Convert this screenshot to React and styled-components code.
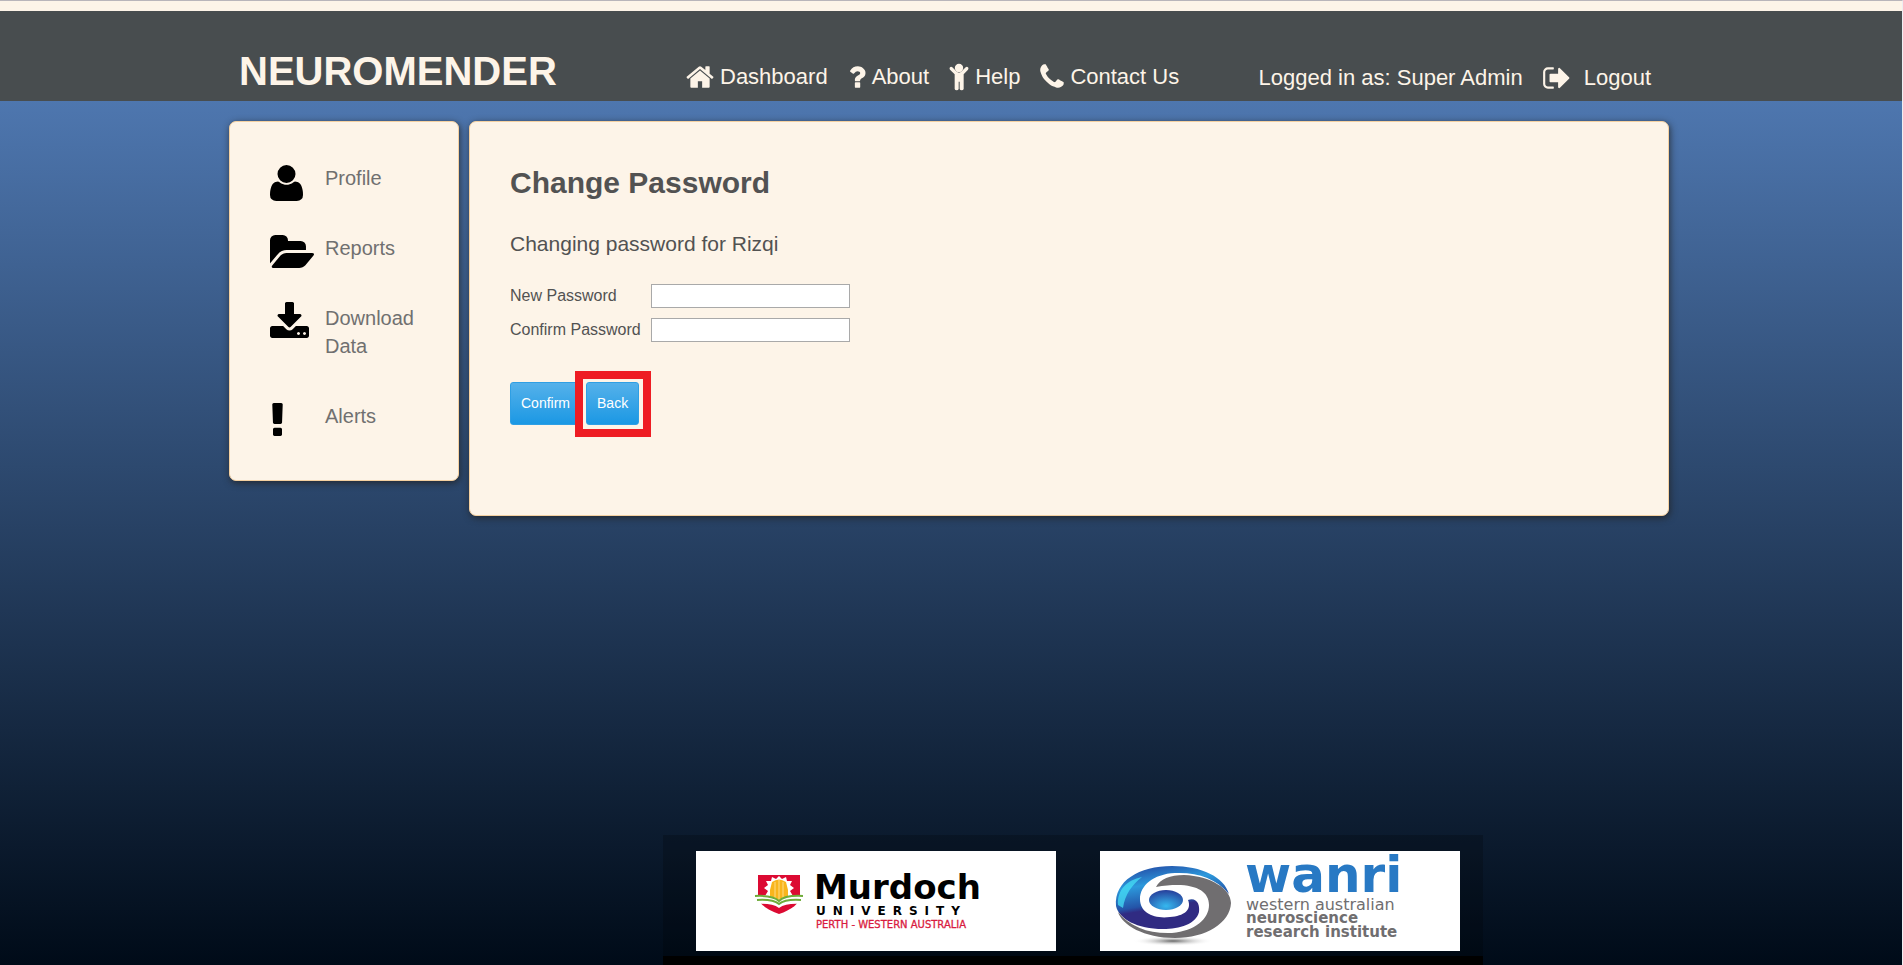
import React from 'react';
import styled, { createGlobalStyle } from 'styled-components';

const cream = '#fdf4e8';

const GlobalStyle = createGlobalStyle`
  * { box-sizing: border-box; }
  body {
    margin: 0;
    font-family: "Liberation Sans", Arial, sans-serif;
    color: #525252;
  }
`;

const Page = styled.div`
  min-height: 100vh;
  display: flex;
  flex-direction: column;
  border-top: 1px solid #b9b5ba;
  border-right: 1px solid #eeeef2;
  background: linear-gradient(to bottom, #4f78b1 0, #4f78b1 9%, #000b18 100%);
`;

const TopStrip = styled.div`
  height: 10px;
  background: ${cream};
`;

const Container = styled.div`
  width: 100%;
  max-width: 1444px;
  margin: 0 auto;
  padding-right: 4px;
`;

const Header = styled.header`
  background: #484d4f;
`;

const HeaderRow = styled(Container)`
  height: 90px;
  padding-top: 36px;
  display: flex;
  align-items: flex-start;
  color: ${cream};
`;

const Brand = styled.h1`
  margin: 0 0 0 10px;
  width: 447px;
  font-size: 40px;
  line-height: 48px;
`;

const Nav = styled.nav`
  display: flex;
  flex: 1;
  gap: 20px;
  padding-top: 15px;
`;

const NavLink = styled.a`
  display: flex;
  align-items: center;
  gap: ${(p) => p.$gap || 6}px;
  color: inherit;
  font-size: 22px;
  line-height: 30px;
  text-decoration: none;
  white-space: nowrap;
`;

const Account = styled.div`
  display: flex;
  align-items: center;
  gap: 20px;
  padding: 16px 18px 0 0;
  font-size: 22px;
  line-height: 30px;
`;

const Columns = styled(Container)`
  display: flex;
  align-items: flex-start;
  gap: 10px;
  margin-top: 20px;
`;

const Card = styled.section`
  background: ${cream};
  border: 1px solid #f4d0a0;
  border-radius: 7px;
  box-shadow: 1px 2px 7px rgba(34, 34, 34, 0.8);
`;

const Sidebar = styled(Card).attrs({ as: 'nav' })`
  flex: none;
  width: 230px;
  min-height: 360px;
  padding: 42px 40px 0;
`;

const SideLink = styled.a`
  display: flex;
  min-height: 28px;
  margin-bottom: 42px;
  color: #707070;
  font-size: 20px;
  line-height: 28px;
  text-decoration: none;
`;

const SideIcon = styled.span`
  flex: none;
  width: 55px;
  height: 28px;
  padding-top: 1px;
  color: #000;
`;

const Content = styled(Card).attrs({ as: 'main' })`
  flex: 1;
  min-height: 395px;
  padding: 40px 40px 42px;
`;

const Title = styled.h2`
  margin: 0 0 28px;
  font-size: 30px;
  line-height: 42px;
`;

const Subtitle = styled.p`
  margin: 0 0 28px;
  font-size: 21px;
  line-height: 24px;
`;

const Field = styled.div`
  display: flex;
  align-items: center;
  height: 24px;
  margin-bottom: 10px;
`;

const Label = styled.label`
  width: 141px;
  font-size: 16px;
  line-height: 20px;
`;

const Input = styled.input`
  width: 199px;
  height: 24px;
  padding: 2px;
  border: 1px solid #a9a9a9;
  background: #fff;
  font-size: 14px;
`;

const Actions = styled.div`
  display: flex;
  gap: 5px;
  margin-top: 40px;
`;

const Button = styled.button`
  height: 43px;
  padding: 0 10px 2px;
  border: 1px solid #2f9fe4;
  border-radius: 3px;
  background: linear-gradient(#55b1ea, #1b98e4);
  color: #fff;
  font: 14px "Liberation Sans", Arial, sans-serif;
`;

const Highlight = styled.div`
  position: relative;
  display: flex;

  &::before {
    content: "";
    position: absolute;
    inset: -11px -12px -12px -11px;
    border: 8px solid #ee1c23;
    background: ${cream};
  }

  ${Button} { position: relative; }
`;

const FooterRow = styled(Container)`
  margin-top: auto;
`;

const Sponsors = styled.footer`
  width: 820px;
  max-width: 100%;
  margin-left: 434px;
  padding: 16px 33px 5px;
  display: flex;
  gap: 44px;
  background: rgba(0, 0, 0, 0.2);
`;

const BaseBar = styled.div`
  width: 820px;
  max-width: 100%;
  height: 9px;
  margin-left: 434px;
  background: #000;
`;

const Logo = styled.a`
  display: flex;
  width: 360px;
  height: 100px;
  background: #fff;
  text-decoration: none;
`;

const wideFont = '"DejaVu Sans", Verdana, sans-serif';

const GlyphSvg = styled.svg`
  display: block;
  overflow: visible;
`;

const Glyph = ({ d, size, x = 0, width = 1792, y = 0, flip }) => (
  <GlyphSvg width={Math.round((size * width) / 1792)} height={size} viewBox={`${x} ${y} ${width} 1792`} fill="currentColor" aria-hidden="true">
    <path d={d} transform={flip ? 'translate(0 1536) scale(1 -1)' : undefined} />
  </GlyphSvg>
);

const paths = {
  home: 'M1472 992v480q0 26-19 45t-45 19h-384v-384h-256v384h-384q-26 0-45-19t-19-45v-480q0-1 .5-3t.5-3l575-474 575 474q1 2 1 6zm223-69l-62 74q-8 9-21 11h-3q-13 0-21-7l-692-577-692 577q-12 8-24 7-13-2-21-11l-62-74q-8-10-7-23.5t11-21.5l719-599q32-26 76-26t76 26l244 204v-195q0-14 9-23t23-9h192q14 0 23 9t9 23v408l219 182q10 8 11 21.5t-7 23.5z',
  question: 'M1088 1256v240q0 16-12 28t-28 12h-240q-16 0-28-12t-12-28v-240q0-16 12-28t28-12h240q16 0 28 12t12 28zm316-600q0 54-15.5 101t-35 76.5-55 59.5-57.5 43.5-61 35.5q-41 23-68.5 65t-27.5 67q0 17-12 32.5t-28 15.5h-240q-15 0-25.5-18.5t-10.5-37.5v-45q0-83 65-156.5t143-108.5q59-27 84-56t25-76q0-42-46.5-74t-107.5-32q-65 0-108 29-35 25-107 115-13 16-31 16-12 0-25-8l-164-125q-13-10-15.5-25t5.5-28q160-266 464-266 80 0 161 31t146 83 106 127.5 41 158.5z',
  phone: 'M1600 1240q0 27-10 70.5t-21 68.5q-21 50-122 106-94 51-186 51-27 0-52.5-3.5t-57.5-12.5-47.5-14.5-55.5-20.5-49-18q-98-35-175-83-128-79-264.5-215.5t-215.5-264.5q-48-77-83-175-3-9-18-49t-20.5-55.5-14.5-47.5-12.5-57.5-3.5-52.5q0-92 51-186 56-101 106-122 25-11 68.5-21t70.5-10q14 0 21 3 18 6 53 76 11 19 30 54t35 63.5 31 53.5q3 4 17.5 25t21.5 35.5 7 28.5q0 20-28.5 50t-62 55-62 53-28.5 46q0 9 5 22.5t8.5 20.5 14 24 11.5 19q76 137 174 235t235 174q2 1 19 11.5t24 14 20.5 8.5 22.5 5q18 0 46-28.5t53-62 55-62 50-28.5q14 0 28.5 7t35.5 21.5 25 17.5q25 15 53.5 31t63.5 35 54 30q70 35 76 53 3 7 3 21z',
  signOut: 'M704 1440q0 4 1 20t.5 26.5-3 23.5-10 19.5-20.5 6.5h-320q-119 0-203.5-84.5t-84.5-203.5v-704q0-119 84.5-203.5t203.5-84.5h320q13 0 22.5 9.5t9.5 22.5q0 4 1 20t.5 26.5-3 23.5-10 19.5-20.5 6.5h-320q-66 0-113 47t-47 113v704q0 66 47 113t113 47h312l11.5 1 11.5 3 8 5.5 7 9 2 13.5zm928-544q0 26-19 45l-544 544q-19 19-45 19t-45-19-19-45v-288h-448q-26 0-45-19t-19-45v-384q0-26 19-45t45-19h448v-288q0-26 19-45t45-19 45 19l544 544q19 19 19 45z',
  user: 'M1408 131q0 -120 -73 -189.5t-194 -69.5h-874q-121 0 -194 69.5t-73 189.5q0 53 3.5 103.5t14 109t26.5 108.5t43 97.5t62 81t85.5 53.5t111.5 20q9 0 42 -21.5t74.5 -48t108 -48t133.5 -21.5t133.5 21.5t108 48t74.5 48t42 21.5q61 0 111.5 -20t85.5 -53.5t62 -81t43 -97.5t26.5 -108.5t14 -109t3.5 -103.5zM1088 1024q0 -159 -112.5 -271.5t-271.5 -112.5t-271.5 112.5t-112.5 271.5t112.5 271.5t271.5 112.5t271.5 -112.5t112.5 -271.5z',
  folder: 'M1879 952q0 31-31 66l-336 396q-43 51-120.500 86.500t-143.500 35.500h-1088q-34 0-60.500-13t-26.500-43q0-31 31-66l336-396q43-51 120.500-86.500t143.500-35.500h1088q34 0 60.500 13t26.500 43zm-343-344v160h-832q-94 0-197 47.500t-164 119.500l-337 396-5 6q0-4-.5-12.500t-.5-12.500v-960q0-92 66-158t158-66h320q92 0 158 66t66 158v32h544q92 0 158 66t66 158z',
  download: 'M1344 1344q0-26-19-45t-45-19-45 19-19 45 19 45 45 19 45-19 19-45zm256 0q0-26-19-45t-45-19-45 19-19 45 19 45 45 19 45-19 19-45zm128-224v320q0 40-28 68t-68 28h-1472q-40 0-68-28t-28-68v-320q0-40 28-68t68-28h465l135 136q58 56 136 56t136-56l136-136h464q40 0 68 28t28 68zm-325-569q17 41-14 70l-448 448q-18 19-45 19t-45-19l-448-448q-31-29-14-70 17-39 59-39h256v-448q0-26 19-45t45-19h256q26 0 45 19t19 45v448h256q42 0 59 39z',
  alert: 'M1088 1248v224q0 26-19 45t-45 19h-256q-26 0-45-19t-19-45v-224q0-26 19-45t45-19h256q26 0 45 19t19 45zm30-1056l-28 768q-1 26-20.5 45t-45.5 19h-256q-26 0-45.5-19t-20.5-45l-28-768q-1-26 17.5-45t44.5-19h320q26 0 44.5 19t17.5 45z',
};

const ChildIcon = () => (
  <svg width="20" height="28" viewBox="0 0 60 84" fill="currentColor" aria-hidden="true">
    <circle cx="30" cy="15" r="12.500" />
    <path d="M2 14Q6 9 10 13L22 25Q30 33 38 25L50 13Q54 9 58 14Q59 17 57 20L44 34V78Q43 82 38 82Q33 82 32 78V56H29V78Q28 82 23 82Q18 82 17 78V34L3 20Q1 17 2 14Z" />
  </svg>
);

const MurdochLogo = () => (
  <svg width="360" height="100" viewBox="0 0 360 100" role="img" aria-label="Murdoch University">
    <path d="M62 24H104V44C104 53 95 59 83 63C71 59 62 53 62 44Z" fill="#dc0a32" />
    <path d="M83 25L86 28L90 26L91 30L96 30L94 34L98 37L94 40L97 45H69L72 40L68 37L72 34L70 30L75 30L76 26L80 28Z" fill="#fff" />
    <path d="M76 31Q83 26 90 31L92 39V45L88 49L83 51L78 49L74 45V39Z" fill="#f9b51d" />
    <path d="M79 31V48M83 29V50M87 31V48" stroke="#fff6d0" strokeWidth=".6" />
    <path d="M60 44Q76 43 83 50Q90 43 106 44L105 53Q90 52 83 57Q76 52 61 53Z" fill="#fff" />
    <path d="M59 45Q77 44 83 50Q89 44 107 45M61 49Q77 48 83 53Q89 48 105 49" fill="none" stroke="#6fac39" strokeWidth="2" />
    <text x="118" y="48" fontFamily={wideFont} fontSize="34" fontWeight="700">Murdoch</text>
    <text x="120" y="64" fontFamily={wideFont} fontSize="12" fontWeight="700" letterSpacing="7">UNIVERSITY</text>
    <text x="120" y="77" fontFamily={wideFont} fontSize="10" stroke="#d91b40" strokeWidth=".3" fill="#d91b40">PERTH - WESTERN AUSTRALIA</text>
  </svg>
);

const WanriLogo = () => (
  <svg width="360" height="100" viewBox="0 0 360 100" role="img" aria-label="wanri, western australian neuroscience research institute">
    <defs>
      <linearGradient id="orb" x1="0" y1="0" x2="0.3" y2="1">
        <stop offset="0" stopColor="#223a99" />
        <stop offset="0.35" stopColor="#2c99dc" />
        <stop offset="0.65" stopColor="#2454a8" />
        <stop offset="0.72" stopColor="#302b82" />
      </linearGradient>
      <radialGradient id="pupil" cx=".5" cy=".8" r=".8">
        <stop offset="0" stopColor="#35b8ef" />
        <stop offset="1" stopColor="#273e9a" />
      </radialGradient>
      <radialGradient id="ground">
        <stop offset="0" stopColor="#666" />
        <stop offset="1" stopColor="#fff" stopOpacity="0" />
      </radialGradient>
    </defs>
    <ellipse cx="73" cy="90" rx="40" ry="5" fill="url(#ground)" />
    <path d="M16 55C14 30 39 15 72 15C102 15 124 26 129 43C116 27 97 21 75 22C53 23 40 35 40 48C40 62 54 68 70 66C84 65 92 59 88 49C97 46 100 54 99 61C96 73 80 78 63 78C37 78 19 68 16 55Z" fill="url(#orb)" />
    <path d="M18 54C17 39 27 29 42 26C32 34 25 43 23 57Z" fill="#45dff5" opacity=".75" />
    <path d="M56 36C60 28 70 24 84 24C111 25 131 38 131 52C130 72 106 87 75 87C44 87 22 74 18 61C30 76 49 83 72 82C95 80 109 68 109 54C109 38 91 30 56 36Z" fill="#706e70" />
    <ellipse cx="66" cy="49" rx="17" ry="10" fill="url(#pupil)" />
    <text x="145" y="41" fontFamily={wideFont} fontSize="50" fontWeight="700" fill="#2879c4">wanri</text>
    <g fontFamily={wideFont} fontSize="15" fill="#706e70">
      <text x="146" y="59" fontSize="16">western australian</text>
      <text x="146" y="72" fontWeight="700">neuroscience</text>
      <text x="146" y="86" fontWeight="700">research institute</text>
    </g>
  </svg>
);

const sideItems = [
  { label: 'Profile', d: paths.user, flip: true, y: 128 },
  { label: 'Reports', d: paths.folder, x: 0, width: 1879, y: 128 },
  { label: 'Download Data', d: paths.download, x: 64, y: 128 },
  { label: 'Alerts', d: paths.alert, x: 576, y: 128 },
];

export default function App() {
  return (
    <Page>
      <GlobalStyle />
      <TopStrip />
      <Header>
        <HeaderRow>
          <Brand>NEUROMENDER</Brand>
          <Nav aria-label="Main">
            <NavLink href="#dashboard"><Glyph d={paths.home} size={30} x={64} width={1664} />Dashboard</NavLink>
            <NavLink href="#about"><Glyph d={paths.question} size={30} x={360} width={1072} />About</NavLink>
            <NavLink href="#help"><ChildIcon />Help</NavLink>
            <NavLink href="#contact"><Glyph d={paths.phone} size={30} x={192} width={1408} />Contact Us</NavLink>
          </Nav>
          <Account>
            <span>Logged in as: Super Admin</span>
            <NavLink href="#logout" $gap={14}><Glyph d={paths.signOut} size={30} x={64} width={1600} />Logout</NavLink>
          </Account>
        </HeaderRow>
      </Header>
      <Columns>
        <Sidebar aria-label="Sections">
          {sideItems.map(({ label, ...icon }) => (
            <SideLink key={label} href={`#${label.split(' ')[0].toLowerCase()}`}>
              <SideIcon><Glyph size={42} {...icon} /></SideIcon>
              {label}
            </SideLink>
          ))}
        </Sidebar>
        <Content>
          <Title>Change Password</Title>
          <Subtitle>Changing password for Rizqi</Subtitle>
          <form onSubmit={(e) => e.preventDefault()}>
            <Field>
              <Label htmlFor="new-password">New Password</Label>
              <Input id="new-password" type="password" />
            </Field>
            <Field>
              <Label htmlFor="confirm-password">Confirm Password</Label>
              <Input id="confirm-password" type="password" />
            </Field>
            <Actions>
              <Button type="submit">Confirm</Button>
              <Highlight><Button type="button">Back</Button></Highlight>
            </Actions>
          </form>
        </Content>
      </Columns>
      <FooterRow>
        <Sponsors>
          <Logo href="#murdoch"><MurdochLogo /></Logo>
          <Logo href="#wanri"><WanriLogo /></Logo>
        </Sponsors>
        <BaseBar />
      </FooterRow>
    </Page>
  );
}
